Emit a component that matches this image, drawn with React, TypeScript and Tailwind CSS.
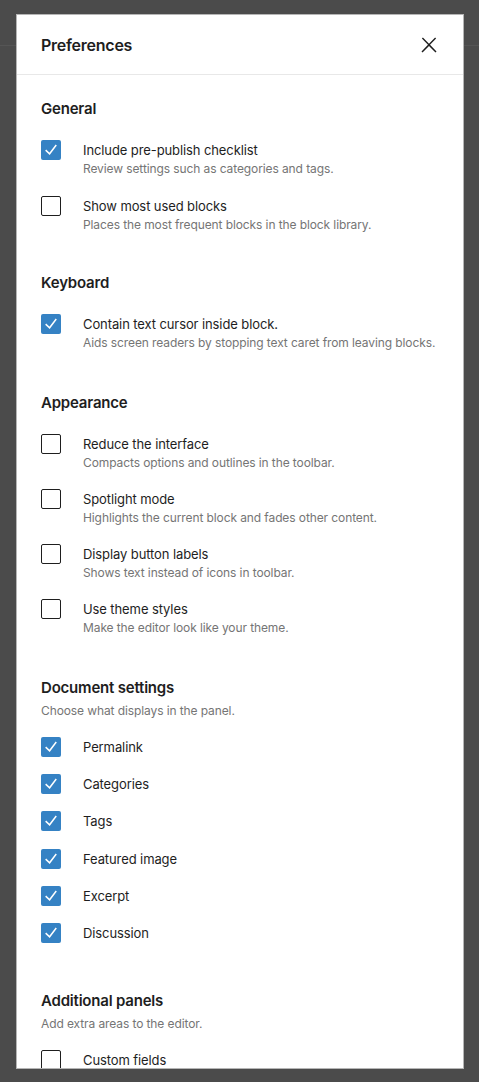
import React from "react";

const font = { fontFamily: "Inter, 'Noto Sans', sans-serif" };

function Check({ checked }: { checked: boolean }) {
  if (checked) {
    return (
      <span className="flex h-5 w-5 shrink-0 items-center justify-center rounded-[2px] bg-[#3582c4]">
        <svg width="20" height="20" viewBox="0 0 20 20" fill="none">
          <path d="M5.2 10.6 L8.6 13.8 L14.8 5.6" stroke="#fff" strokeWidth="1.5" strokeLinecap="square" fill="none" />
        </svg>
      </span>
    );
  }
  return <span className="block h-5 w-5 shrink-0 rounded-[2px] border-[1.5px] border-[#1e1e1e] bg-white" />;
}

function Item({ checked, label, desc }: { checked: boolean; label: string; desc?: string }) {
  return (
    <div className="flex items-start gap-[22px]">
      <Check checked={checked} />
      <div className="flex flex-col">
        <span className="whitespace-nowrap text-[13px] leading-5 tracking-[-0.1px] text-[#1e1e1e]">{label}</span>
        {desc && (
          <span className="whitespace-nowrap text-[12px] leading-[18px] tracking-[-0.1px] text-[#757575]">{desc}</span>
        )}
      </div>
    </div>
  );
}

function Heading({ children }: { children: React.ReactNode }) {
  return <h2 className="text-[15px] font-semibold leading-[22px] tracking-[-0.2px] text-[#1e1e1e]">{children}</h2>;
}

export default function App() {
  return (
    <div className="relative h-[1082px] w-[479px] overflow-hidden bg-[#4b4b4b]" style={font}>
      <div className="h-[46px] border-b border-[#555555]" />
      <div className="absolute left-[16px] top-[14px] flex h-[1055px] w-[448px] flex-col overflow-hidden border border-[#b5b5b5] bg-white">
        <div className="flex h-[60px] shrink-0 items-center justify-between border-b border-[#e8e8e8] pl-[24px] pr-[22px]">
          <h1 className="text-[16px] font-semibold tracking-[-0.25px] text-[#1e1e1e]">Preferences</h1>
          <svg width="24" height="24" viewBox="0 0 24 24" fill="#1e1e1e">
            <path d="M13 11.8l6.1-6.3-1-1-6.1 6.2-6.1-6.2-1 1 6.1 6.3-6.5 6.7 1 1 6.5-6.6 6.5 6.6 1-1z" />
          </svg>
        </div>
        <div className="flex flex-col px-[24px] pt-[23px]">
          <Heading>General</Heading>
          <div className="mt-[20px] flex flex-col gap-[18px]">
            <Item checked label="Include pre-publish checklist" desc="Review settings such as categories and tags." />
            <Item checked={false} label="Show most used blocks" desc="Places the most frequent blocks in the block library." />
          </div>

          <div className="mt-[38px]">
            <Heading>Keyboard</Heading>
          </div>
          <div className="mt-[20px] flex flex-col gap-[18px]">
            <Item checked label="Contain text cursor inside block." desc="Aids screen readers by stopping text caret from leaving blocks." />
          </div>

          <div className="mt-[40px]">
            <Heading>Appearance</Heading>
          </div>
          <div className="mt-[20px] flex flex-col gap-[17px]">
            <Item checked={false} label="Reduce the interface" desc="Compacts options and outlines in the toolbar." />
            <Item checked={false} label="Spotlight mode" desc="Highlights the current block and fades other content." />
            <Item checked={false} label="Display button labels" desc="Shows text instead of icons in toolbar." />
            <Item checked={false} label="Use theme styles" desc="Make the editor look like your theme." />
          </div>

          <div className="mt-[40px]">
            <Heading>Document settings</Heading>
          </div>
          <p className="mt-[3px] text-[12px] leading-[18px] tracking-[-0.1px] text-[#757575]">Choose what displays in the panel.</p>
          <div className="mt-[17px] flex flex-col gap-[17.2px]">
            <Item checked label="Permalink" />
            <Item checked label="Categories" />
            <Item checked label="Tags" />
            <Item checked label="Featured image" />
            <Item checked label="Excerpt" />
            <Item checked label="Discussion" />
          </div>

          <div className="mt-[47px]">
            <Heading>Additional panels</Heading>
          </div>
          <p className="mt-[3px] text-[12px] leading-[18px] tracking-[-0.1px] text-[#757575]">Add extra areas to the editor.</p>
          <div className="mt-[17px] flex flex-col">
            <Item checked={false} label="Custom fields" />
          </div>
        </div>
      </div>
    </div>
  );
}
